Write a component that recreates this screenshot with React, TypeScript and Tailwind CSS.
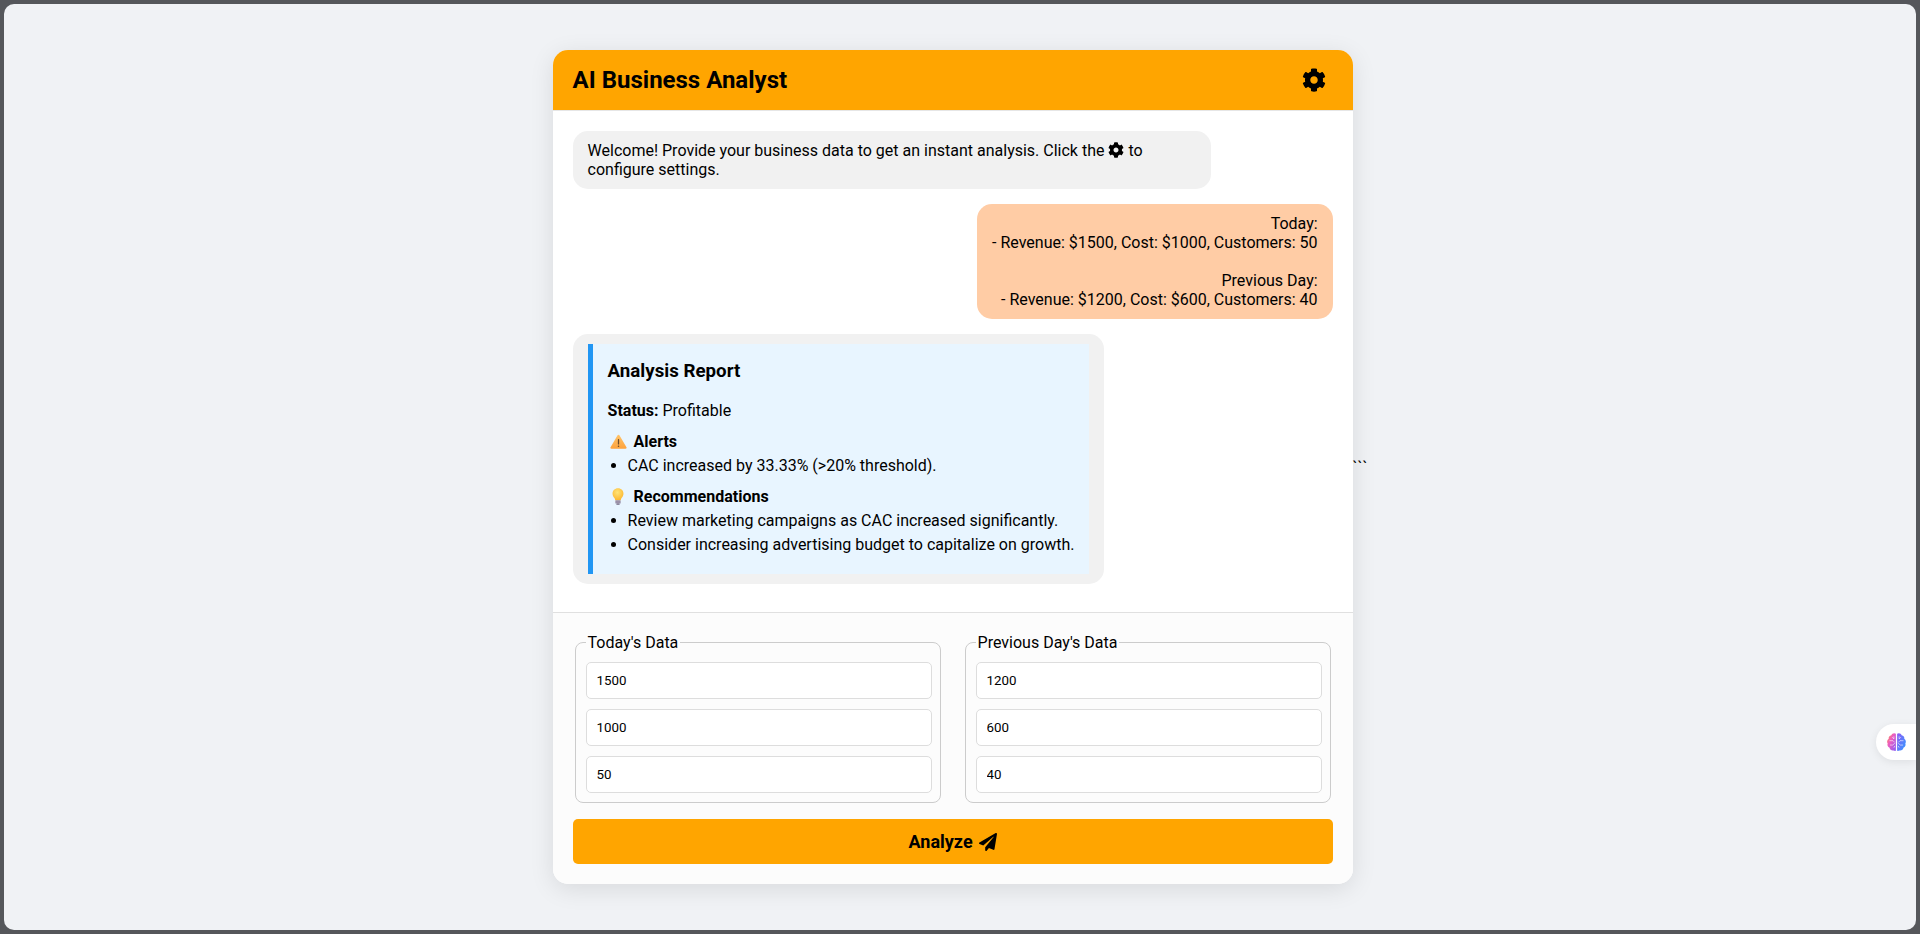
import { FaCog, FaPaperPlane } from "react-icons/fa";

function WarningIcon() {
  return (
    <svg viewBox="0 0 32 28" className="w-[17px] h-[15px] shrink-0">
      <defs>
        <linearGradient id="warn" x1="0" y1="0" x2="0" y2="1">
          <stop offset="0" stopColor="#ffc46b" />
          <stop offset="1" stopColor="#fda23c" />
        </linearGradient>
      </defs>
      <path d="M16 1.500c.9 0 1.600.5 2 1.200l13 22.200c.8 1.400-.1 2.600-1.700 2.600H2.700C1.100 27.500.2 26.300 1 24.900l13-22.200c.4-.7 1.100-1.200 2-1.200z" fill="url(#warn)" />
      <rect x="14.800" y="9.500" width="2.400" height="10" rx="1" fill="#6b4a2b" />
      <circle cx="16" cy="22.800" r="1.500" fill="#6b4a2b" />
    </svg>
  );
}

function BulbIcon() {
  return (
    <svg viewBox="0 0 20 28" className="w-[14px] h-[17px] shrink-0">
      <defs>
        <radialGradient id="bulb" cx="0.45" cy="0.35" r="0.7">
          <stop offset="0" stopColor="#ffe477" />
          <stop offset="1" stopColor="#fcb42c" />
        </radialGradient>
      </defs>
      <path d="M10 0.500C4.700 0.500 1 4.400 1 9.300c0 3.300 1.700 5.300 3.100 7.200.8 1.100 1.200 2.200 1.300 3.500h9.200c.1-1.300.5-2.400 1.300-3.500 1.400-1.900 3.100-3.900 3.100-7.200C19 4.400 15.300.5 10 .5z" fill="url(#bulb)" />
      <rect x="5.600" y="20" width="8.800" height="5.500" rx="1" fill="#9b91a8" />
      <rect x="7.300" y="25.500" width="5.400" height="2.200" rx="1" fill="#6f6780" />
    </svg>
  );
}

function BrainIcon() {
  return (
    <svg viewBox="0 0 24 24" className="w-[21px] h-[22px]">
      <defs>
        <linearGradient id="brainL" x1="0" y1="0" x2="1" y2="1">
          <stop offset="0" stopColor="#ff9a3d" />
          <stop offset="0.4" stopColor="#ee5cc0" />
          <stop offset="1" stopColor="#8a5cf6" />
        </linearGradient>
        <linearGradient id="brainR" x1="0" y1="0" x2="1" y2="1">
          <stop offset="0" stopColor="#8f5cf6" />
          <stop offset="1" stopColor="#2f9bff" />
        </linearGradient>
      </defs>
      <path d="M11.300 2.500c-2-1.300-4.600-.4-5.200 1.700C4 4.500 2.700 6.300 3.100 8.200 1.300 9.400.7 11.800 1.900 13.600c-.8 2 .2 4.200 2.200 4.900.3 2.200 2.400 3.600 4.500 3.100 1 .6 2 .7 2.700.4z" fill="url(#brainL)" />
      <path d="M12.700 2.500c2-1.300 4.600-.4 5.200 1.700 2.100.3 3.400 2.100 3 4 1.800 1.200 2.400 3.600 1.200 5.400.8 2-.2 4.200-2.200 4.900-.3 2.200-2.400 3.600-4.500 3.100-1 .6-2 .7-2.700.4z" fill="url(#brainR)" />
      <path d="M4 10.500h4l2 2M4.500 15.500h3l2.500-2M7 6.500l2 2v-3M20 10.500h-4l-2 2M19.500 15.500h-3l-2.500-2M17 6.500l-2 2v-3M9 18.500l1-2M15 18.500l-1-2" fill="none" stroke="#ffffff" strokeOpacity="0.75" strokeWidth="0.9" />
    </svg>
  );
}

function DataGroup({ title, values }: { title: string; values: string[] }) {
  return (
    <fieldset className="mx-[2px] border border-[#cccccc] rounded-[8px] pt-[10px] pl-[10px] pr-[8px] pb-[9px] min-w-0">
      <legend className="px-[2px] text-[16px]">{title}</legend>
      <div className="flex flex-col gap-[10px]">
        {values.map((v, i) => (
          <input
            key={i}
            type="text"
            readOnly
            value={v}
            className="w-full h-[37px] px-[10px] bg-white border border-[#dddddd] rounded-[5px] text-[13.33px] text-black outline-none font-['Roboto',sans-serif]"
          />
        ))}
      </div>
    </fieldset>
  );
}

export default function App() {
  return (
    <div className="h-screen bg-[#55575b] p-[4px] font-['Roboto',sans-serif] text-[16px] leading-[19px] text-black">
      <div className="h-full bg-[#f0f2f5] rounded-[10px] flex items-center justify-center overflow-hidden relative">
        <div className="w-[800px] h-[834px] shrink-0 bg-white rounded-[15px] shadow-[0_5px_25px_rgba(0,0,0,0.1)] flex flex-col overflow-hidden">
          <header className="h-[61px] shrink-0 bg-[#ffa500] border-b border-[#e6e6e6] flex items-center justify-between pl-[20px] pr-[27px]">
            <h1 className="text-[24px] leading-[28px] font-bold">AI Business Analyst</h1>
            <FaCog className="w-[24px] h-[24px]" />
          </header>

          <main className="flex-1 min-h-0 overflow-hidden p-[20px] flex flex-col gap-[15px]">
            <div className="w-[638px] bg-[#f1f1f1] rounded-[15px] py-[10px] px-[15px]">
              Welcome! Provide your business data to get an instant analysis. Click the{" "}
              <FaCog className="inline-block w-[16px] h-[16px] align-[-2px]" /> to configure settings.
            </div>

            <div className="self-end bg-[#ffcca5] rounded-[15px] py-[10px] px-[15px] text-right whitespace-pre-line">
              {"Today:\n- Revenue: $1500, Cost: $1000, Customers: 50\n\nPrevious Day:\n- Revenue: $1200, Cost: $600, Customers: 40"}
            </div>

            <div className="self-start bg-[#f1f1f1] rounded-[15px] py-[10px] px-[15px]">
              <div className="bg-[#e8f5ff] border-l-[5px] border-[#2196f3] pt-[16px] px-[15px] pb-[15px]">
                <h3 className="text-[18.72px] leading-[22px] font-bold mb-[19px]">Analysis Report</h3>
                <p className="mb-[12px]">
                  <strong className="font-bold">Status:</strong> Profitable
                </p>
                <h4 className="font-bold flex items-center mb-[5px]">
                  <span className="w-[26px] pl-[2px] flex items-center">
                    <WarningIcon />
                  </span>
                  Alerts
                </h4>
                <ul className="list-disc pl-[20px] mb-[12px]">
                  <li className="mb-[5px]">CAC increased by 33.33% (&gt;20% threshold).</li>
                </ul>
                <h4 className="font-bold flex items-center mb-[5px]">
                  <span className="w-[26px] pl-[3px] flex items-center">
                    <BulbIcon />
                  </span>
                  Recommendations
                </h4>
                <ul className="list-disc pl-[20px]">
                  <li className="mb-[5px]">Review marketing campaigns as CAC increased significantly.</li>
                  <li className="mb-[5px]">Consider increasing advertising budget to capitalize on growth.</li>
                </ul>
              </div>
            </div>
          </main>

          <footer className="shrink-0 bg-[#fcfcfc] border-t border-[#e0e0e0] p-[20px] flex flex-col gap-[16px]">
            <div className="grid grid-cols-2 gap-[20px]">
              <DataGroup title="Today's Data" values={["1500", "1000", "50"]} />
              <DataGroup title="Previous Day's Data" values={["1200", "600", "40"]} />
            </div>
            <button className="h-[45px] bg-[#ffa500] rounded-[5px] font-bold text-[18px] flex items-center justify-center gap-[6px]">
              Analyze <FaPaperPlane className="w-[18px] h-[18px]" />
            </button>
          </footer>
        </div>
        <span className="shrink-0 self-center">```</span>

        <div className="absolute right-0 top-[720px] w-[40px] h-[36px] bg-white rounded-l-[18px] flex items-center justify-center shadow-[0_2px_8px_rgba(0,0,0,0.08)]">
          <BrainIcon />
        </div>
      </div>
    </div>
  );
}
